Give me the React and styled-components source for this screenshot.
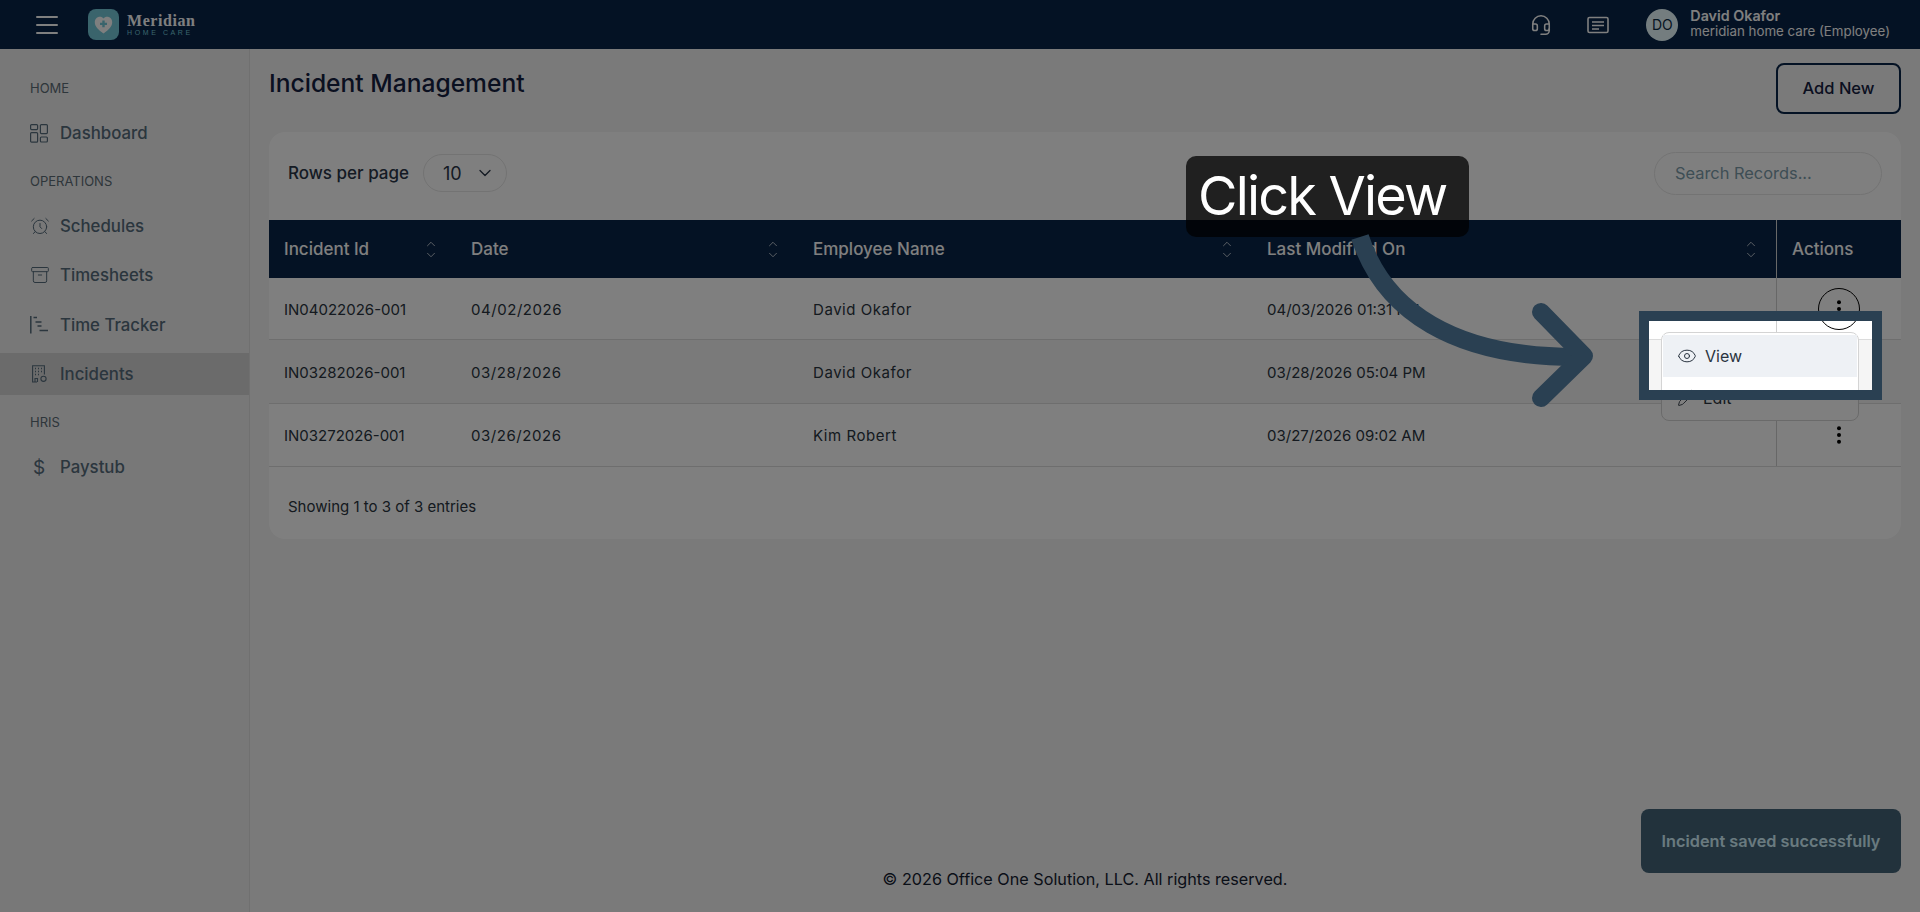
import React from "react";
import styled, { createGlobalStyle } from "styled-components";
import { AlarmClock, Archive, ChevronDown, ChevronUp, Eye, Headset, Pen } from "lucide-react";

const rows = [
  { id: "IN04022026-001", date: "04/02/2026", name: "David Okafor", modified: "04/03/2026 01:31 PM", height: 62, open: true },
  { id: "IN03282026-001", date: "03/28/2026", name: "David Okafor", modified: "03/28/2026 05:04 PM", height: 64, tinted: true },
  { id: "IN03272026-001", date: "03/26/2026", name: "Kim Robert", modified: "03/27/2026 09:02 AM", height: 63 },
];

const columns = ["Incident Id", "Date", "Employee Name", "Last Modified On"];

const DashIcon = () => (
  <svg width="18" height="19" viewBox="0 0 18 19" fill="none" stroke="currentColor" strokeWidth="1.2">
    <rect x="0.6" y="0.6" width="7" height="5" rx="1" />
    <rect x="10.4" y="0.6" width="7" height="9" rx="1" />
    <rect x="0.6" y="8.6" width="7" height="9.6" rx="1" />
    <rect x="10.4" y="13" width="7" height="5" rx="1" />
  </svg>
);

const TrackerIcon = () => (
  <svg width="18" height="18" viewBox="0 0 18 18" fill="none" stroke="currentColor" strokeWidth="1.5">
    <path d="M0.8 0v17.5M3.5 1.5h3.5M5.5 6h6M7.5 10h4M9.5 14.5h8.5" />
  </svg>
);

const BuildingIcon = () => (
  <svg width="18" height="18" viewBox="0 0 18 18" fill="none" stroke="currentColor" strokeWidth="1.1">
    <path d="M7 17H2.6V0.8h11.8v8.6" />
    <path d="M5 3.5h1M8 3.5h1M11 3.5h1M5 6.5h1M8 6.5h1M11 6.5h1M5 9.5h1M8 9.5h1" strokeWidth="1.6" />
    <path d="M5 17v-3.5h2.5V17" />
    <circle cx="13.5" cy="13.8" r="2.6" />
  </svg>
);

const MessageIcon = () => (
  <svg width="22" height="18" viewBox="0 0 22 18" fill="none" stroke="currentColor" strokeWidth="1.6">
    <rect x="1" y="1.5" width="20" height="15" rx="1.5" />
    <path d="M5 6h12M5 9.5h12M5 13h7" />
  </svg>
);

const LogoHeart = () => (
  <svg width="19" height="18" viewBox="0 0 19 18">
    <path d="M9.5 17.5C4 13.5 0.8 10.4 0.8 6.2 0.8 3 3.2 0.8 5.9 0.8c1.5 0 2.7 0.5 3.6 1.6 0.9-1.1 2.1-1.6 3.6-1.6 2.7 0 5.1 2.2 5.1 5.4 0 4.2-3.2 7.3-8.7 11.3z" fill="#fff" />
    <path d="M8.3 4.5h2.4v2.2h2.3v2.4h-2.3v2.2H8.3V9.1H6V6.7h2.3z" fill="#74c8d8" />
  </svg>
);

const Kebab = () => (
  <svg width="6" height="18" viewBox="0 0 6 18" fill="#000">
    <circle cx="3" cy="2.3" r="2" />
    <circle cx="3" cy="9" r="2" />
    <circle cx="3" cy="15.7" r="2" />
  </svg>
);

const SortIcon = () => (
  <SortBox>
    <ChevronUp size={14} strokeWidth={1.2} />
    <ChevronDown size={14} strokeWidth={1.2} />
  </SortBox>
);

const NavItem = ({ icon, label, active }) => (
  <Item $active={active}>
    <ItemIcon>{icon}</ItemIcon>
    {label}
  </Item>
);

const App = () => {
  return (
    <>
      <GlobalStyle />
      <Page>
        <Header>
          <HeaderLeft>
            <Burger>
              <span />
              <span />
              <span />
            </Burger>
            <LogoMark>
              <LogoHeart />
            </LogoMark>
            <LogoText>
              <LogoName>Meridian</LogoName>
              <LogoSub>HOME CARE</LogoSub>
            </LogoText>
          </HeaderLeft>
          <HeaderRight>
            <HeadIcon>
              <Headset size={22} strokeWidth={1.7} />
            </HeadIcon>
            <HeadIcon>
              <MessageIcon />
            </HeadIcon>
            <Avatar>DO</Avatar>
            <UserBox>
              <UserName>David Okafor</UserName>
              <UserOrg>meridian home care (Employee)</UserOrg>
            </UserBox>
          </HeaderRight>
        </Header>

        <Body>
          <Sidebar>
            <SideLabel>HOME</SideLabel>
            <NavItem icon={<DashIcon />} label="Dashboard" />
            <SideLabel>OPERATIONS</SideLabel>
            <NavItem icon={<AlarmClock size={20} strokeWidth={1.2} />} label="Schedules" />
            <NavItem icon={<Archive size={20} strokeWidth={1.2} />} label="Timesheets" />
            <NavItem icon={<TrackerIcon />} label="Time Tracker" />
            <NavItem icon={<BuildingIcon />} label="Incidents" active />
            <SideLabel>HRIS</SideLabel>
            <NavItem icon={<Dollar>$</Dollar>} label="Paystub" />
          </Sidebar>

          <Main>
            <TitleRow>
              <Title>Incident Management</Title>
              <AddButton>Add New</AddButton>
            </TitleRow>

            <Card>
              <Toolbar>
                <RowsControl>
                  Rows per page
                  <RowsSelect>
                    10
                    <ChevronDown size={20} strokeWidth={1.6} />
                  </RowsSelect>
                </RowsControl>
                <Search>Search Records...</Search>
              </Toolbar>

              <HeadRow>
                {columns.map((col) => (
                  <HeadCell key={col}>
                    {col}
                    <SortIcon />
                  </HeadCell>
                ))}
                <ActionsHead>Actions</ActionsHead>
              </HeadRow>

              {rows.map((row) => (
                <Row key={row.id} $height={row.height} $tinted={row.tinted}>
                  <Cell>{row.id}</Cell>
                  <Cell $spaced>{row.date}</Cell>
                  <Cell $spaced>{row.name}</Cell>
                  <Cell>{row.modified}</Cell>
                  <ActionsCell>
                    <KebabButton $open={row.open}>
                      <Kebab />
                    </KebabButton>
                    {row.open && (
                      <Menu>
                        <MenuItem $active>
                          <Eye size={20} strokeWidth={1.2} />
                          View
                        </MenuItem>
                        <MenuItem>
                          <Pen size={18} strokeWidth={1.2} />
                          Edit
                        </MenuItem>
                      </Menu>
                    )}
                  </ActionsCell>
                </Row>
              ))}

              <Entries>Showing 1 to 3 of 3 entries</Entries>
            </Card>

            <Footer>© 2026 Office One Solution, LLC. All rights reserved.</Footer>
          </Main>
        </Body>

        <Toast>Incident saved successfully</Toast>

        <Highlight />
        <Tooltip>Click View</Tooltip>
        <Arrow viewBox="0 0 260 190" fill="none" stroke="#2a4052" strokeWidth="18" strokeLinecap="round" strokeLinejoin="round">
          <path d="M16 11C40 85 110 131 232 131" strokeLinecap="butt" />
          <path d="M197 86L240 130L197 172" />
        </Arrow>
      </Page>
    </>
  );
};

export default App;

const GlobalStyle = createGlobalStyle`
  html, body {
    margin: 0;
    padding: 0;
  }
  body {
    font-family: "Inter", "Liberation Sans", sans-serif;
  }
`;

const Page = styled.div`
  position: relative;
  width: 1920px;
  height: 912px;
  overflow: hidden;
  background: #f4f4f4;
  display: flex;
  flex-direction: column;
`;

const Header = styled.header`
  height: 49px;
  flex: none;
  background: #082448;
  display: flex;
  align-items: center;
  justify-content: space-between;
  padding: 0 30px 0 36px;
`;

const HeaderLeft = styled.div`
  display: flex;
  align-items: center;
`;

const Burger = styled.div`
  width: 22px;
  display: flex;
  flex-direction: column;
  gap: 6px;
  margin-right: 30px;
  span {
    height: 2px;
    background: #fff;
    border-radius: 1px;
  }
`;

const LogoMark = styled.div`
  width: 31px;
  height: 31px;
  border-radius: 8px;
  background: #74c8d8;
  display: flex;
  align-items: center;
  justify-content: center;
  margin-right: 8px;
`;

const LogoText = styled.div`
  display: flex;
  flex-direction: column;
`;

const LogoName = styled.div`
  font-family: "Liberation Serif", serif;
  font-weight: 700;
  font-size: 16px;
  line-height: 15px;
  letter-spacing: 0.55px;
  color: #fff;
`;

const LogoSub = styled.div`
  font-family: "Liberation Sans", sans-serif;
  font-size: 7px;
  line-height: 9px;
  letter-spacing: 2.6px;
  color: #74c8d8;
`;

const HeaderRight = styled.div`
  display: flex;
  align-items: center;
`;

const HeadIcon = styled.div`
  color: #fff;
  display: flex;
  margin-right: 35px;
`;

const Avatar = styled.div`
  width: 32px;
  height: 32px;
  border-radius: 50%;
  background: #e8fbff;
  color: #0a2a44;
  font-size: 14px;
  display: flex;
  align-items: center;
  justify-content: center;
  margin-left: 2px;
  margin-right: 12px;
`;

const UserBox = styled.div`
  display: flex;
  flex-direction: column;
  margin-bottom: 3px;
`;

const UserName = styled.div`
  font-size: 14.3px;
  line-height: 17px;
  font-weight: 600;
  color: #fff;
`;

const UserOrg = styled.div`
  font-size: 13.3px;
  line-height: 15px;
  color: #fff;
`;

const Body = styled.div`
  flex: 1;
  display: flex;
  min-height: 0;
`;

const Sidebar = styled.aside`
  width: 250px;
  flex: none;
  box-sizing: border-box;
  background: #f0f0f0;
  border-right: 1px solid #e0e0e0;
  padding-top: 29px;
`;

const SideLabel = styled.div`
  height: 20px;
  line-height: 20px;
  padding-left: 30px;
  font-size: 13px;
  color: #5c6c76;
  margin-bottom: 14px;
  margin-top: 17px;
  &:first-child {
    margin-top: 0;
  }
`;

const Item = styled.div`
  height: 42px;
  display: flex;
  align-items: center;
  padding-left: 30px;
  margin-bottom: 7.4px;
  font-size: 16.8px;
  font-weight: 500;
  color: #566c7c;
  background: ${(p) => (p.$active ? "#d6d6d6" : "transparent")};
`;

const ItemIcon = styled.span`
  width: 30px;
  display: flex;
  align-items: center;
  color: #566c7c;
`;

const Dollar = styled.span`
  font-size: 19px;
  font-weight: 400;
  width: 18px;
  text-align: center;
`;

const Main = styled.main`
  flex: 1;
  min-width: 0;
  display: flex;
  flex-direction: column;
  padding: 0 19px 0 19px;
`;

const TitleRow = styled.div`
  height: 83px;
  flex: none;
  display: flex;
  justify-content: space-between;
  align-items: flex-start;
`;

const Title = styled.h1`
  margin: 20px 0 0;
  font-size: 24.6px;
  line-height: 28px;
  font-weight: 500;
  color: #142040;
`;

const AddButton = styled.button`
  margin-top: 14px;
  padding: 0 0 2px;
  width: 125px;
  height: 51px;
  background: transparent;
  border: 2px solid #082448;
  border-radius: 8px;
  font-family: inherit;
  font-size: 16.5px;
  font-weight: 500;
  color: #142040;
`;

const Card = styled.section`
  background: #fff;
  border-radius: 16px;
  height: 407px;
  flex: none;
  display: flex;
  flex-direction: column;
`;

const Toolbar = styled.div`
  height: 82px;
  flex: none;
  margin-bottom: 6px;
  display: flex;
  align-items: center;
  justify-content: space-between;
  padding: 0 19px 0 19px;
`;

const RowsControl = styled.div`
  display: flex;
  align-items: center;
  gap: 14px;
  font-size: 17px;
  font-weight: 500;
  color: #2a3648;
`;

const RowsSelect = styled.div`
  width: 84px;
  height: 38px;
  box-sizing: border-box;
  border: 1px solid #e6e6e6;
  border-radius: 19px;
  display: flex;
  align-items: center;
  justify-content: space-between;
  padding: 0 11px 0 19px;
  font-size: 18px;
  font-weight: 400;
`;

const Search = styled.div`
  width: 228px;
  height: 43px;
  box-sizing: border-box;
  border: 1px solid #e6e6e6;
  border-radius: 22px;
  display: flex;
  align-items: center;
  padding-left: 20px;
  font-size: 16.4px;
  color: #7c9caa;
`;

const gridColumns = "187px 342px 454px 524px 125px";

const HeadRow = styled.div`
  display: grid;
  grid-template-columns: ${gridColumns};
  height: 58px;
  flex: none;
  background: #082448;
`;

const HeadCell = styled.div`
  display: flex;
  align-items: center;
  justify-content: space-between;
  padding: 0 18px 0 15px;
  font-size: 17px;
  font-weight: 500;
  color: #fff;
`;

const ActionsHead = styled(HeadCell)`
  border-left: 1px solid #d0d0d0;
`;

const SortBox = styled.span`
  display: flex;
  flex-direction: column;
  color: #fff;
  svg + svg {
    margin-top: -3px;
  }
`;

const Row = styled.div`
  display: grid;
  grid-template-columns: ${gridColumns};
  box-sizing: border-box;
  height: ${(p) => p.$height}px;
  flex: none;
  background: ${(p) => (p.$tinted ? "#f5f5f5" : "#fff")};
  border-bottom: 1px solid #dcdcdc;
`;

const Cell = styled.div`
  display: flex;
  align-items: center;
  padding: 1px 0 0 15px;
  font-size: 15px;
  letter-spacing: ${(p) => (p.$spaced ? "0.55px" : "0")};
  color: #2a3440;
`;

const ActionsCell = styled.div`
  position: relative;
  display: flex;
  align-items: center;
  justify-content: center;
  border-left: 1px solid #cfcfcf;
`;

const KebabButton = styled.div`
  width: 42px;
  height: 42px;
  box-sizing: border-box;
  border-radius: 50%;
  display: flex;
  align-items: center;
  justify-content: center;
  border: 1px solid ${(p) => (p.$open ? "#000" : "transparent")};
`;

const Menu = styled.div`
  position: absolute;
  z-index: 5;
  top: 54px;
  left: -116px;
  width: 198px;
  height: 89px;
  box-sizing: border-box;
  padding: 2px 1px;
  background: #fff;
  border: 1px solid #d4d4d4;
  border-radius: 8px;
`;

const MenuItem = styled.div`
  height: 42px;
  display: flex;
  align-items: center;
  gap: 8px;
  padding-left: 14px;
  font-size: 16px;
  color: #2a3440;
  background: ${(p) => (p.$active ? "#eef1f5" : "transparent")};
`;

const Entries = styled.div`
  margin-top: 30px;
  padding-left: 19px;
  font-size: 15px;
  line-height: 20px;
  color: #2a3440;
`;

const Footer = styled.footer`
  margin-top: auto;
  margin-bottom: 23px;
  text-align: center;
  font-size: 16.2px;
  line-height: 20px;
  color: #142030;
`;

const Toast = styled.div`
  position: absolute;
  right: 19px;
  bottom: 39px;
  width: 260px;
  height: 64px;
  border-radius: 8px;
  background: #446478;
  color: #d4f4ff;
  font-size: 16.3px;
  font-weight: 600;
  display: flex;
  align-items: center;
  justify-content: center;
`;

const Highlight = styled.div`
  position: absolute;
  z-index: 20;
  left: 1639px;
  top: 311px;
  width: 243px;
  height: 89px;
  box-sizing: border-box;
  border: 10px solid #2a4052;
  box-shadow: 0 0 0 3000px rgba(0, 0, 0, 0.5);
`;

const Tooltip = styled.div`
  position: absolute;
  z-index: 21;
  left: 1186px;
  top: 156px;
  width: 283px;
  height: 81px;
  box-sizing: border-box;
  padding-left: 12px;
  border-radius: 10px;
  background: rgba(0, 0, 0, 0.75);
  color: #fff;
  font-size: 54px;
  letter-spacing: -1.8px;
  line-height: 80px;
  white-space: nowrap;
`;

const Arrow = styled.svg`
  position: absolute;
  z-index: 21;
  left: 1344px;
  top: 226px;
  width: 260px;
  height: 190px;
`;
